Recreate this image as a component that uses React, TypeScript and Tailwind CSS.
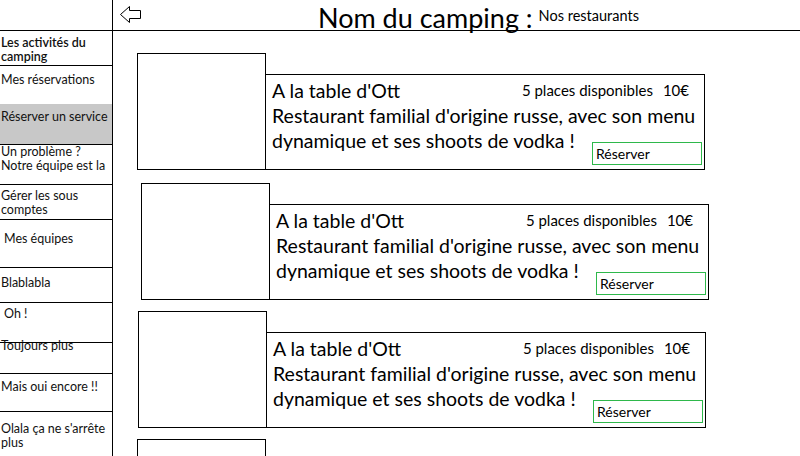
import React from "react";

const menu = [
  { label: ["Les activités du", "camping"], h: "h-[35px]", pt: "pt-[5px]", bold: true, border: true },
  { label: ["Mes réservations"], h: "h-[38px]", pt: "pt-[7px]", border: false },
  { label: ["Réserver un service"], h: "h-[41px]", pt: "pt-[6px]", border: true, active: true },
  { label: ["Un problème ?", "Notre équipe est la"], h: "h-[40px]", pt: "pt-0", border: true },
  { label: ["Gérer les sous", "comptes"], h: "h-[35px]", pt: "pt-[4px]", border: true },
  { label: ["Mes équipes"], h: "h-[48px]", pt: "pt-[12px]", border: true, indent: true },
  { label: ["Blablabla"], h: "h-[35px]", pt: "pt-[8px]", border: true },
  { label: ["Oh !"], h: "h-[40px]", pt: "pt-[4px]", border: true, indent: true },
  { label: ["Toujours plus"], h: "h-[35px]", pt: "-mt-[4px]", border: true },
  { label: ["Mais oui encore !!"], h: "h-[38px]", pt: "pt-[6px]", border: true },
  { label: ["Olala ça ne s'arrête", "plus"], h: "h-[44px]", pt: "pt-[10px]", border: false },
];

const cards = [
  { ml: "ml-[24px]", mt: "mt-[22px]" },
  { ml: "ml-[28px]", mt: "mt-[13px]" },
  { ml: "ml-[25px]", mt: "mt-[11px]" },
];

const Sidebar = () => {
  return (
    <div className="w-[113px] shrink-0 border-r border-black">
      <div className="h-[31px] border-b border-black"></div>
      {menu.map((m, i) => (
        <div
          key={i}
          className={`${m.h} ${m.border ? "border-b border-black" : ""} ${m.active ? "bg-[#c8c8c8]" : ""}`}
        >
          <div
            className={`${m.pt} ${m.indent ? "pl-[4px]" : "pl-[1px]"} text-[12.5px] leading-[14px] text-[#111] ${m.bold ? "font-semibold" : ""}`}
          >
            {m.label.map((l, j) => (
              <div key={j} className="whitespace-nowrap">
                {l}
              </div>
            ))}
          </div>
        </div>
      ))}
    </div>
  );
};

const Card = ({ ml, mt }: { ml: string; mt: string }) => {
  return (
    <div className={`flex items-end ${ml} ${mt}`}>
      {/* picture placeholder */}
      <div className="w-[129px] h-[117px] border border-black shrink-0"></div>
      <div className="-ml-px w-[440px] h-[96px] border border-black pl-[6px] pr-[2px] pt-[3px] text-[19.5px] leading-[25px] text-black">
        <div className="flex items-center">
          <span className="flex-1">A la table d'Ott</span>
          <span className="text-[15px] mr-[10px]">5 places disponibles</span>
          <span className="text-[15px] mr-[13px]">10€</span>
        </div>
        <div className="whitespace-nowrap">Restaurant familial d'origine russe, avec son menu</div>
        <div className="flex">
          <span className="flex-1 whitespace-nowrap">dynamique et ses shoots de vodka !</span>
          <button className="mt-[14px] w-[110px] h-[23px] border border-[#2eb84b] text-left pl-[3px] text-[14px] leading-[21px]">
            Réserver
          </button>
        </div>
      </div>
    </div>
  );
};

export default function App() {
  return (
    <div className="w-[800px] h-[456px] overflow-hidden bg-white flex font-['Lato',sans-serif]">
      <Sidebar />
      <div className="flex-1">
        <div className="h-[31px] border-b border-black flex items-end">
          <svg width="22" height="17" viewBox="0 0 22 17" className="ml-[7px] mb-[7px] shrink-0">
            <polygon
              points="0.5,8.5 9.5,0.5 9.5,4.5 20.5,4.5 20.5,12.5 9.5,12.5 9.5,16.5"
              fill="white"
              stroke="black"
              strokeWidth="1"
            />
          </svg>
          <span className="ml-[176px] text-[27px] leading-[32px] -mb-[4px] whitespace-nowrap">Nom du camping :</span>
          <span className="ml-[6px] text-[14.5px] leading-[18px] mb-[5px] whitespace-nowrap">Nos restaurants</span>
        </div>
        {cards.map((c, i) => (
          <Card key={i} ml={c.ml} mt={c.mt} />
        ))}
        {/* next card, only its picture shows above the fold */}
        <div className="ml-[24px] mt-[11px] w-[129px] h-[117px] border border-black"></div>
      </div>
    </div>
  );
}
